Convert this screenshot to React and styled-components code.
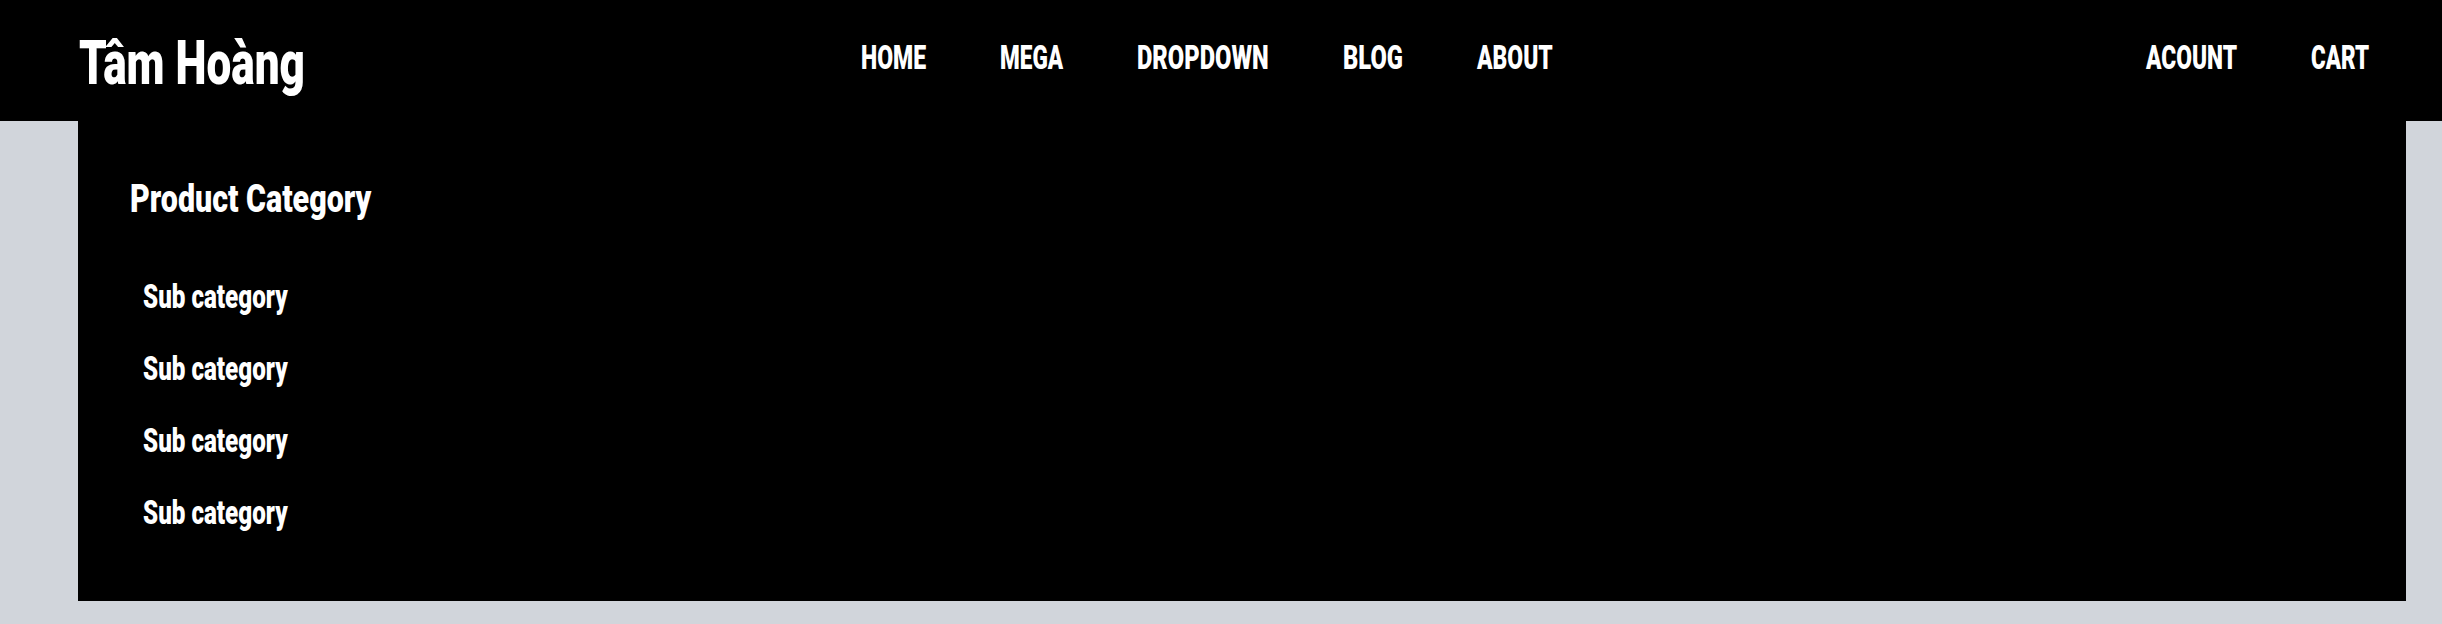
import React, { useLayoutEffect, useRef, useState } from 'react'
import styled, { createGlobalStyle } from 'styled-components'

const Global = createGlobalStyle`
  * { box-sizing: border-box; }
  body {
    margin: 0;
    background: #d1d5db;
    font-family: Roboto, "DejaVu Sans Condensed", sans-serif;
  }
`

// the original uses a tall condensed face; we squeeze the installed one to the same width
const FitBox = styled.span`
  display: block;
  width: ${p => p.$w}px;
  font-size: ${p => p.$size}px;
  line-height: 1;
  font-weight: 900;
  color: #fff;
  white-space: nowrap;
`
const Ink = styled.span`
  display: inline-block;
  transform-origin: left top;
`

function Fit({ w, size, children }) {
  const ref = useRef(null)
  const [k, setK] = useState(1)
  useLayoutEffect(() => {
    const measure = () => {
      const natural = ref.current ? ref.current.offsetWidth : 0
      if (natural) setK(w / natural)
    }
    measure()
    if (document.fonts && document.fonts.ready) document.fonts.ready.then(measure)
  }, [w])
  return (
    <FitBox $w={w} $size={size}>
      <Ink ref={ref} style={{ transform: `scaleX(${k})` }}>{children}</Ink>
    </FitBox>
  )
}

const Header = styled.header`
  background: #000;
  height: 121px;
`
const Bar = styled.div`
  width: 2328px;
  margin-left: 78px;
  height: 100%;
  padding-top: 32px;
  display: flex;
  justify-content: space-between;
  align-items: flex-start;
`
const Logo = styled.a`
  display: block;
  padding-left: 1px;
`
const Menu = styled.nav`
  display: flex;
  margin-top: 8px;
`
const MenuLink = styled.a`
  display: block;
  padding: 0 37px;
  cursor: pointer;
`
const Panel = styled.section`
  width: 2328px;
  margin-left: 78px;
  background: #000;
  padding: 59px 0 72px 52px;
`
const Heading = styled.h2`
  margin: 0 0 61px;
`
const SubList = styled.ul`
  list-style: none;
  margin: 0;
  padding: 0 0 0 13px;
  display: flex;
  flex-direction: column;
  gap: 39px;
`

const mainLinks = [
  ['HOME', 65],
  ['MEGA', 63],
  ['DROPDOWN', 132],
  ['BLOG', 60],
  ['ABOUT', 76],
]
const userLinks = [
  ['ACOUNT', 91],
  ['CART', 58],
]

export default function App() {
  return (
    <>
      <Global />
      <Header>
        <Bar>
          <Logo>
            <Fit w={226} size={62}>Tâm Hoàng</Fit>
          </Logo>
          <Menu>
            {mainLinks.map(([label, w]) => (
              <MenuLink key={label}>
                <Fit w={w} size={34}>{label}</Fit>
              </MenuLink>
            ))}
          </Menu>
          <Menu>
            {userLinks.map(([label, w]) => (
              <MenuLink key={label}>
                <Fit w={w} size={34}>{label}</Fit>
              </MenuLink>
            ))}
          </Menu>
        </Bar>
      </Header>
      <Panel>
        <Heading>
          <Fit w={241} size={39}>Product Category</Fit>
        </Heading>
        <SubList>
          {[0, 1, 2, 3].map(i => (
            <li key={i}>
              <Fit w={145} size={33}>Sub category</Fit>
            </li>
          ))}
        </SubList>
      </Panel>
    </>
  )
}
